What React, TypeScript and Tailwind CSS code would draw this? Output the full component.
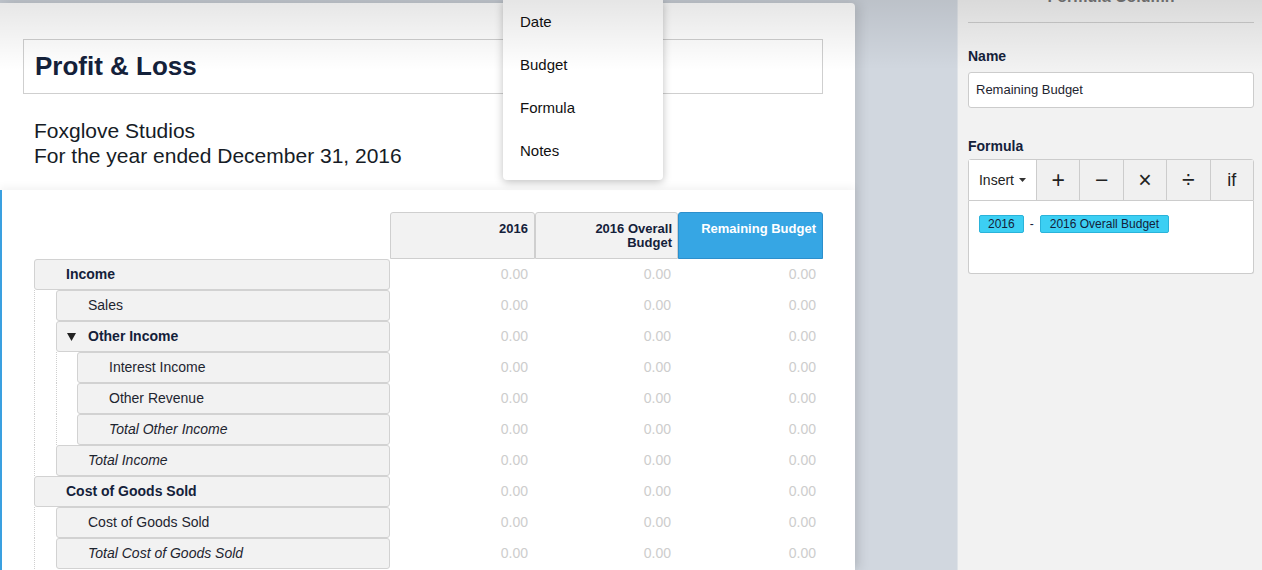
import React from "react";

type Row = { label: string; depth: number; kind: "group" | "item" | "total"; toggle?: boolean };

const rows: Row[] = [
  { label: "Income", depth: 0, kind: "group" },
  { label: "Sales", depth: 1, kind: "item" },
  { label: "Other Income", depth: 1, kind: "group", toggle: true },
  { label: "Interest Income", depth: 2, kind: "item" },
  { label: "Other Revenue", depth: 2, kind: "item" },
  { label: "Total Other Income", depth: 2, kind: "total" },
  { label: "Total Income", depth: 1, kind: "total" },
  { label: "Cost of Goods Sold", depth: 0, kind: "group" },
  { label: "Cost of Goods Sold", depth: 1, kind: "item" },
  { label: "Total Cost of Goods Sold", depth: 1, kind: "total" },
];

const spacerWidths = ["w-[22px]", "w-[21px]"];

function TableRow({ row }: { row: Row }) {
  const textClass =
    row.kind === "group" ? "font-bold text-[#14213a]" : row.kind === "total" ? "italic text-[#1e2530]" : "text-[#1e2530]";
  return (
    <div className="flex h-[31px]">
      <div className="flex w-[356px]">
        {Array.from({ length: row.depth }).map((_, i) => (
          <div key={i} className={`${spacerWidths[i]} shrink-0 border-l border-dotted border-[#cfcfcf]`} />
        ))}
        <div
          className={`flex flex-1 items-center rounded-[3px] border border-[#d2d2d2] bg-[#f2f2f2] text-[14px] ${
            row.toggle ? "pl-[10px]" : "pl-[31px]"
          } ${textClass}`}
        >
          {row.toggle && (
            <svg width="9" height="8" viewBox="0 0 9 8" className="mr-[12px]">
              <path d="M0 0 H9 L4.5 8 Z" fill="#222" />
            </svg>
          )}
          {row.label}
        </div>
      </div>
      {["w-[145px]", "w-[143px]", "w-[145px]"].map((w, i) => (
        <div key={i} className={`${w} pr-[7px] text-right text-[14px] leading-[31px] text-[#cdcdcd]`}>
          0.00
        </div>
      ))}
    </div>
  );
}

export default function App() {
  return (
    <div
      className="relative flex h-[570px] w-[1262px] overflow-hidden bg-[#d1d7df]"
      style={{ fontFamily: '"Liberation Sans", Arial, sans-serif' }}
    >
      {/* Report card */}
      <div className="flex w-[855px] shrink-0 flex-col pt-[3px]">
        <div className="flex flex-1 flex-col rounded-tr-[4px] bg-white shadow-[4px_0_12px_rgba(0,0,0,0.12)]">
          <div className="h-[187px] pl-[23px] pr-[32px] pt-[36px]">
            <div className="flex h-[55px] items-center border border-[#cfcfcf] pl-[11px]">
              <h1 className="text-[26px] font-bold text-[#14213a]">Profit &amp; Loss</h1>
            </div>
            <div className="mt-[24px] pl-[11px] text-[21px] leading-[25px] text-[#161c26]">
              <div>Foxglove Studios</div>
              <div>For the year ended December 31, 2016</div>
            </div>
          </div>

          <div className="flex-1 border-l-2 border-[#3aa0e0] bg-white pl-[32px] pt-[22px] shadow-[0_-3px_8px_rgba(0,0,0,0.05)]">
            <div className="flex h-[47px]">
              <div className="w-[356px]" />
              <div className="w-[145px] rounded-t-[3px] border border-[#cfcfcf] bg-[#f2f2f2] pr-[6px] pt-[9px] text-right text-[13px] font-bold leading-[14px] text-[#14213a]">
                2016
              </div>
              <div className="w-[143px] rounded-t-[3px] border border-[#cfcfcf] bg-[#f2f2f2] pr-[5px] pt-[9px] text-right text-[13px] font-bold leading-[14px] text-[#14213a]">
                2016 Overall
                <br />
                Budget
              </div>
              <div className="w-[145px] rounded-t-[3px] border border-[#2c8fcc] bg-[#36a6e4] pr-[6px] pt-[9px] text-right text-[13px] font-bold leading-[14px] text-white">
                Remaining Budget
              </div>
            </div>
            {rows.map((r, i) => (
              <TableRow key={i} row={r} />
            ))}
          </div>
        </div>
      </div>

      <div className="flex-1" />

      {/* Formula column panel */}
      <div className="w-[305px] shrink-0 border-l border-[#dfe3e8] bg-[#f2f2f2] pl-[10px] pr-[8px]">
        <div className="flex h-[23px] justify-center border-b border-[#cccccc]">
          <span className="-mt-[12px] text-[16px] font-bold leading-[18px] text-[#777]">Formula Column</span>
        </div>
        <div className="mt-[23px] text-[14px] font-bold leading-[20px] text-[#14213a]">Name</div>
        <div className="mt-[6px] flex h-[36px] items-center rounded-[3px] border border-[#cccccc] bg-white pl-[7px] text-[13px] text-[#1e2530]">
          Remaining Budget
        </div>
        <div className="mt-[28px] text-[14px] font-bold leading-[20px] text-[#14213a]">Formula</div>
        <div className="mt-[3px] flex h-[42px] rounded-t-[3px] border border-[#cccccc] text-[#222]">
          <div className="flex w-[67px] items-center justify-center gap-[5px] bg-white text-[14px]">
            Insert
            <svg width="7" height="4" viewBox="0 0 7 4">
              <path d="M0 0 H7 L3.5 4 Z" fill="#333" />
            </svg>
          </div>
          {["+", "−", "×", "÷", "if"].map((s) => (
            <div
              key={s}
              className={`flex flex-1 items-center justify-center border-l border-[#cccccc] bg-[#f0f0f0] ${
                s === "if" ? "text-[18px]" : "text-[23px]"
              }`}
            >
              {s}
            </div>
          ))}
        </div>
        <div className="flex h-[73px] items-start gap-[6px] rounded-b-[3px] border border-t-0 border-[#cccccc] bg-white pl-[10px] pt-[14px] text-[12px] text-[#14213a]">
          <span className="flex h-[18px] items-center rounded-[2px] border border-[#2ab3da] bg-[#3ccff3] px-[8px]">2016</span>
          <span className="leading-[18px]">-</span>
          <span className="flex h-[18px] items-center rounded-[2px] border border-[#2ab3da] bg-[#3ccff3] px-[9px]">
            2016 Overall Budget
          </span>
        </div>
      </div>

      {/* Column type menu */}
      <div className="absolute left-[503px] top-0 w-[160px] rounded-b-[4px] bg-white pb-[7px] pl-[17px] pt-[1px] text-[15px] text-[#111] shadow-[0_2px_8px_rgba(0,0,0,0.25)]">
        {["Date", "Budget", "Formula", "Notes"].map((m) => (
          <div key={m} className="flex h-[43px] items-center">
            {m}
          </div>
        ))}
      </div>

      {/* scroll fade */}
      <div className="pointer-events-none absolute inset-x-0 top-0 h-[70px] bg-gradient-to-b from-black/10 to-transparent" />
    </div>
  );
}
